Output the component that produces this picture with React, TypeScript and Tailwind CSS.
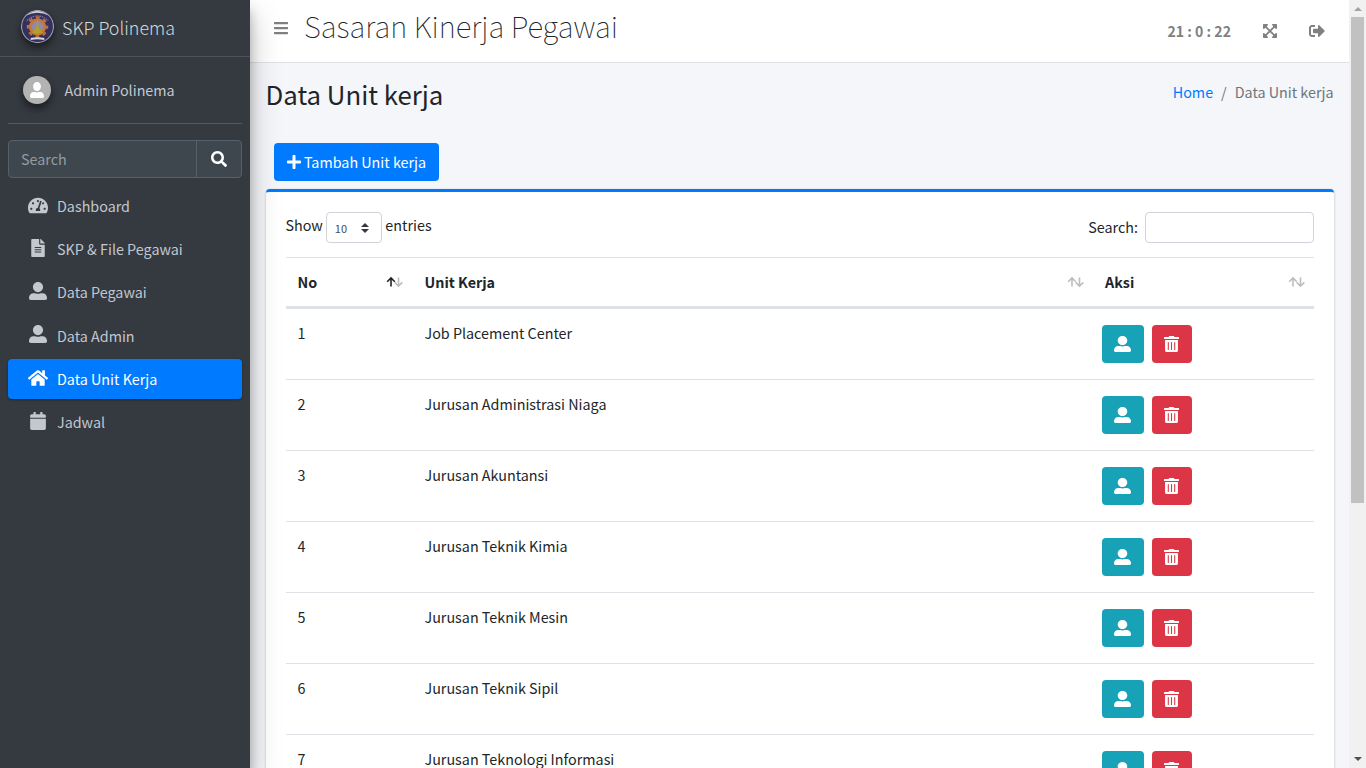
import React from "react";
import {
  FaTachometerAlt, FaFileAlt, FaUserAlt, FaHome, FaCalendar, FaSearch, FaPlus,
  FaBars, FaExpandArrowsAlt, FaSignOutAlt, FaTrashAlt,
} from "react-icons/fa";

const units = [
  "Job Placement Center",
  "Jurusan Administrasi Niaga",
  "Jurusan Akuntansi",
  "Jurusan Teknik Kimia",
  "Jurusan Teknik Mesin",
  "Jurusan Teknik Sipil",
  "Jurusan Teknologi Informasi",
];

const menu = [
  { label: "Dashboard", Icon: FaTachometerAlt, active: false, size: "w-5 h-[19px]" },
  { label: "SKP & File Pegawai", Icon: FaFileAlt, active: false, size: "w-[14px] h-[18px] mb-[2px]" },
  { label: "Data Pegawai", Icon: FaUserAlt, active: false, size: "w-[18px] h-[18px] mb-[2px]" },
  { label: "Data Admin", Icon: FaUserAlt, active: false, size: "w-[18px] h-[18px] mb-[2px]" },
  { label: "Data Unit Kerja", Icon: FaHome, active: true, size: "w-[20px] h-[18px]" },
  { label: "Jadwal", Icon: FaCalendar, active: false, size: "w-[16px] h-[18px] mb-px" },
];

function Logo() {
  return (
    <svg viewBox="0 0 34 34" className="size-[33px] rounded-full shadow-[0_3px_6px_rgba(0,0,0,0.3),0_6px_8px_rgba(0,0,0,0.25)]">
      <circle cx="17" cy="17" r="16.5" fill="#34305f" stroke="#a5a5ab" strokeWidth="1.2" />
      <path d="M5 6Q17-4 29 6Q17-.5 5 6Z" fill="#d4d4d4" />
      <path d="M6 11Q17 1 28 11" fill="none" stroke="#77749a" strokeWidth="1.4" strokeDasharray="1.6 .8" />
      <circle cx="17" cy="17.5" r="9.8" fill="none" stroke="#b9703f" strokeWidth="2.6" strokeDasharray="3.85 3.85" strokeDashoffset="1.9" />
      <circle cx="17" cy="17.5" r="7.4" fill="#8f8aa8" stroke="#c87538" strokeWidth="3" />
      <path d="M17 9l1.4 9.5 4.1 4.8q-5.5 2.4-11 0l4.1-4.8z" fill="#b0a02c" />
      <path d="M10 28.8q7-1.6 14 0v2q-7-1.3-14 0z" fill="#d8d8dd" />
    </svg>
  );
}

function Sort({ asc = false }: { asc?: boolean }) {
  return (
    <svg width="18" height="12" viewBox="0 0 18 12" fill="none" strokeWidth="1.6">
      <path d="M12.5 1.5v8.4M8.7 6.4l3.8 3.8 3.8-3.8" stroke="#bcbdbe" />
      <path d="M5 10.5V2.2M1.2 5.8L5 2l3.8 3.8" stroke={asc ? "#212529" : "#bcbdbe"} />
    </svg>
  );
}

function Sidebar() {
  return (
    <aside className="relative z-10 flex h-full w-[250px] shrink-0 flex-col bg-[#343a40] text-[#c2c7d0] shadow-[0_14px_28px_rgba(0,0,0,0.25),0_10px_10px_rgba(0,0,0,0.22)]">
      <div className="flex h-[57px] shrink-0 items-center border-b border-[#4b545c] pb-[3px] pl-[21px]">
        <Logo />
        <span className="ml-2 text-[17.9px] font-light text-[#d6d8d9]">SKP Polinema</span>
      </div>
      <div className="mx-2 flex h-[67px] shrink-0 items-center border-b border-[#4f5962] pl-[15px]">
        <span className="flex size-7 items-center justify-center rounded-full bg-[#b3b3b3] text-white shadow-[0_3px_6px_rgba(0,0,0,0.3),0_6px_8px_rgba(0,0,0,0.25)]">
          <FaUserAlt className="h-4 w-[14px]" preserveAspectRatio="none" />
        </span>
        <span className="ml-[13.5px]">Admin Polinema</span>
      </div>
      <div className="mx-2 mt-4 flex h-[38px] shrink-0 rounded border border-[#56606a] bg-[#3f474e]">
        <span className="flex flex-1 items-center pl-3 text-[#939ba2]">Search</span>
        <span className="flex w-[45px] items-center justify-center border-l border-[#56606a] text-white">
          <FaSearch className="size-4" />
        </span>
      </div>
      <nav className="mx-2 mt-2 flex flex-col gap-[3.2px]">
        {menu.map(({ label, Icon, active, size }) => (
          <div
            key={label}
            className={
              active
                ? "flex h-10 items-center rounded bg-[#007bff] pl-5 text-white shadow-[0_1px_3px_rgba(0,0,0,0.12),0_1px_2px_rgba(0,0,0,0.24)]"
                : "flex h-10 items-center rounded pl-5"
            }
          >
            <span className="flex w-5 justify-center pb-[1px]">
              <Icon className={`${size} shrink-0`} />
            </span>
            <span className="ml-[9px]">{label}</span>
          </div>
        ))}
      </nav>
    </aside>
  );
}

function Navbar() {
  return (
    <header className="flex h-[63px] shrink-0 items-center border-b border-[#dee2e6] bg-white pr-6 pl-[23px] text-[#808080]">
      <FaBars className="mb-[6px] size-4" />
      <h1 className="mb-3 ml-[15px] text-[29.4px] leading-10 font-thin whitespace-nowrap text-[#212529]">Sasaran Kinerja Pegawai</h1>
      <span className="ml-auto text-[14.1px] font-bold">21 : 0 : 22</span>
      <FaExpandArrowsAlt className="ml-[31px] size-4" />
      <FaSignOutAlt className="ml-[31px] size-4" />
    </header>
  );
}

function Card() {
  return (
    <section className="mr-[15px] ml-4 h-[620px] shrink-0 rounded border-t-[3px] border-[#007bff] bg-white px-5 shadow-[0_0_1px_rgba(0,0,0,0.125),0_1px_3px_rgba(0,0,0,0.2)]">
      <div className="flex h-[65px] items-start justify-between pt-5">
        <div className="-ml-[0.5px] flex">
          <span className="mt-px">Show</span>
          <span className="mr-[3.5px] ml-[3px] flex h-[31px] w-14 items-center justify-between rounded border border-[#ced4da] px-2 text-[11px] text-[#495057]">
            10
            <svg width="8" height="10" viewBox="0 0 8 10" fill="#343a40" className="mr-1">
              <path d="M4 0l4 4H0zM4 10l4-4H0z" />
            </svg>
          </span>
          <span className="mt-px">entries</span>
        </div>
        <div className="flex">
          <span className="mt-[3px]">Search:</span>
          <span className="ml-[7px] h-[31px] w-[169px] rounded border border-[#ced4da]" />
        </div>
      </div>
      <div className="grid h-[52px] grid-cols-[127px_680px_221px] items-center border-t border-b-[3px] border-[#dee2e6] font-bold">
        <div className="flex items-center justify-between pr-[9px] pl-[11.5px]">No<Sort asc /></div>
        <div className="flex items-center justify-between pr-[8px] pl-[11.5px]">Unit Kerja<Sort /></div>
        <div className="flex items-center justify-between pr-[8px] pl-3">Aksi<Sort /></div>
      </div>
      {units.map((unit, i) => (
        <div key={unit} className="grid h-[71px] grid-cols-[127px_680px_221px] border-b border-[#dee2e6]">
          <span className="pt-3 pl-[11.5px]">{i + 1}</span>
          <span className="pt-3 pl-[11.5px]">{unit}</span>
          <div className="flex gap-2 pt-4 pl-[9px] text-white">
            <span className="flex h-[38px] w-[42px] items-center justify-center rounded bg-[#17a2b8] pr-px"><FaUserAlt className="h-4 w-[17px]" preserveAspectRatio="none" /></span>
            <span className="flex h-[38px] w-10 items-center justify-center rounded bg-[#dc3545] pr-px"><FaTrashAlt className="h-4 w-[15px]" preserveAspectRatio="none" /></span>
          </div>
        </div>
      ))}
    </section>
  );
}

export default function App() {
  return (
    <div className="flex h-[768px] w-[1366px] overflow-hidden bg-[#f4f6f9] font-['Noto_Sans_CJK_JP',sans-serif] text-[14.33px] leading-6 text-[#212529]">
      <Sidebar />
      <main className="flex h-full w-[1099px] shrink-0 flex-col overflow-hidden">
        <Navbar />
        <div className="flex h-[80px] shrink-0 justify-between pt-[13px] pr-[15.5px] pl-[15.5px]">
          <h2 className="text-[25.8px] leading-9">Data Unit kerja</h2>
          <div className="flex pt-1 text-[#6c757d]">
            <span className="text-[#007bff]">Home</span>
            <span className="px-2">/</span>
            <span>Data Unit kerja</span>
          </div>
        </div>
        <button className="mb-2 ml-6 flex h-[38px] w-[165px] shrink-0 items-center justify-center rounded bg-[#007bff] pr-px text-white">
          <FaPlus className="mr-[2px] size-4" />Tambah Unit kerja
        </button>
        <Card />
      </main>
      <div className="flex flex-1 flex-col items-center bg-[#f1f1f1]">
        <svg width="16" height="17" viewBox="0 0 16 17"><path d="M4 11h8L8 7z" fill="#a3a3a3" /></svg>
        <div className="h-[486px] w-[13px] bg-[#c1c1c1]" />
        <svg width="16" height="17" viewBox="0 0 16 17" className="mt-auto"><path d="M4 6h8l-4 4z" fill="#505050" /></svg>
      </div>
    </div>
  );
}
